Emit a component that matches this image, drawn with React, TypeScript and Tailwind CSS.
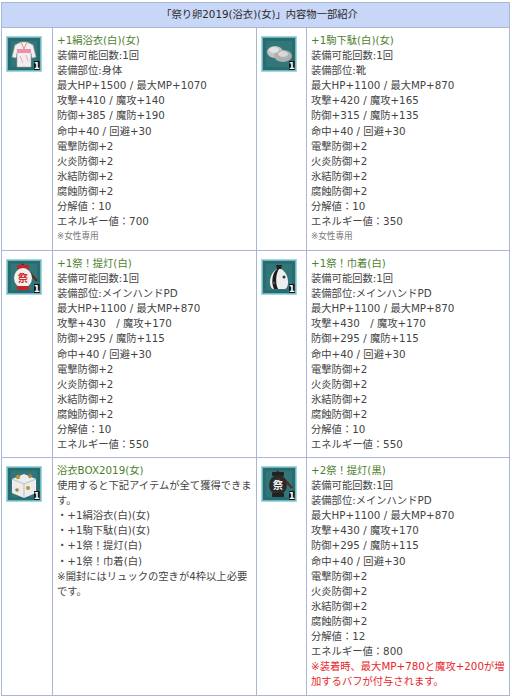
import React from "react";

type Line = { t: string; k?: "title" | "note" | "red" };

const Frame = ({ children }: { children: React.ReactNode }) => (
  <svg width="36" height="36" viewBox="0 0 36 36">
    <rect x="0" y="0" width="36" height="36" fill="#9fd8e0" />
    <rect x="1" y="1" width="34" height="34" fill="#6fb6bf" />
    <rect x="2" y="2" width="32" height="32" fill="#2a6b70" />
    <rect x="5" y="5" width="26" height="26" fill="#357a7e" opacity="0.7" />
    {children}
    <rect x="28" y="25" width="5.5" height="9" fill="#111" />
    <text x="30.8" y="33" fontSize="8.5" fontWeight="bold" fill="#fff" textAnchor="middle" fontFamily="DejaVu Sans, sans-serif">1</text>
  </svg>
);

const Kimono = () => (
  <Frame>
    <path d="M9 9 L15 6 L21 6 L27 9 L30 21 L26 22 L25 17 L25 31 L11 31 L11 17 L10 22 L6 21 Z" fill="#f2eeee" stroke="#a9a3a5" strokeWidth="0.6" />
    <rect x="11" y="13" width="14" height="4" fill="#ef8fae" />
    <path d="M15 6 L18 13 L21 6" fill="none" stroke="#d77" strokeWidth="0.8" />
    <path d="M14 20 L17 27 M20 19 L22 25" stroke="#e79ab0" strokeWidth="0.8" />
  </Frame>
);

const Geta = () => (
  <Frame>
    <ellipse cx="14" cy="16" rx="8" ry="6" fill="#c4c4c4" />
    <ellipse cx="22" cy="20" rx="9" ry="6" fill="#b0b0b0" />
    <ellipse cx="13" cy="14" rx="5" ry="3" fill="#e2e2e2" />
    <ellipse cx="22" cy="18" rx="5" ry="3" fill="#d8d8d8" />
  </Frame>
);

const Lantern = ({ dark }: { dark?: boolean }) => (
  <Frame>
    <line x1="16" y1="5" x2="31" y2="22" stroke="#5a2e1c" strokeWidth="2.5" />
    <rect x="11" y="6" width="12" height="4" rx="1" fill={dark ? "#222" : "#c0262a"} />
    <ellipse cx="17" cy="19" rx="9" ry="10" fill={dark ? "#2b2b2b" : "#f3f0ee"} />
    <rect x="11" y="27" width="12" height="4" rx="1" fill={dark ? "#222" : "#c0262a"} />
    <text x="17" y="23" fontSize="10" fontWeight="bold" fill={dark ? "#f5f5f5" : "#d42a2a"} textAnchor="middle" fontFamily="Noto Sans CJK JP, sans-serif">祭</text>
  </Frame>
);

const Bag = () => (
  <Frame>
    <path d="M15 6 L21 6 L20 10 L16 10 Z" fill="#222" />
    <path d="M16 10 C8 14 7 28 12 30 L24 30 C29 28 28 14 20 10 Z" fill="#eeeeee" />
    <path d="M16 10 C11 14 10 24 13 30 L17 30 C14 24 15 14 18 10 Z" fill="#1c1c1c" />
    <circle cx="23" cy="18" r="1.5" fill="#333" />
    <circle cx="13" cy="24" r="1.2" fill="#555" />
  </Frame>
);

const Box = () => (
  <Frame>
    <path d="M6 13 L18 8 L30 13 L30 27 L18 32 L6 27 Z" fill="#ececec" />
    <path d="M6 13 L18 18 L30 13" fill="none" stroke="#aaa" strokeWidth="0.7" />
    <path d="M18 18 L18 32" stroke="#aaa" strokeWidth="0.7" />
    <circle cx="12" cy="11" r="2.2" fill="#b8943c" />
    <circle cx="24" cy="10" r="2" fill="#a8843a" />
    <circle cx="22" cy="22" r="2" fill="#b8943c" />
    <circle cx="11" cy="24" r="1.8" fill="#a8843a" />
  </Frame>
);

const COMMON: Line[] = [
  { t: "電撃防御+2" },
  { t: "火炎防御+2" },
  { t: "氷結防御+2" },
  { t: "腐蝕防御+2" },
];

const cells: { icon: React.ReactNode; lines: Line[] }[] = [
  {
    icon: <Kimono />,
    lines: [
      { t: "+1絹浴衣(白)(女)", k: "title" },
      { t: "装備可能回数:1回" },
      { t: "装備部位:身体" },
      { t: "最大HP+1500 / 最大MP+1070" },
      { t: "攻撃+410 / 魔攻+140" },
      { t: "防御+385 / 魔防+190" },
      { t: "命中+40 / 回避+30" },
      ...COMMON,
      { t: "分解値：10" },
      { t: "エネルギー値：700" },
      { t: "※女性専用", k: "note" },
    ],
  },
  {
    icon: <Geta />,
    lines: [
      { t: "+1駒下駄(白)(女)", k: "title" },
      { t: "装備可能回数:1回" },
      { t: "装備部位:靴" },
      { t: "最大HP+1100 / 最大MP+870" },
      { t: "攻撃+420 / 魔攻+165" },
      { t: "防御+315 / 魔防+135" },
      { t: "命中+40 / 回避+30" },
      ...COMMON,
      { t: "分解値：10" },
      { t: "エネルギー値：350" },
      { t: "※女性専用", k: "note" },
    ],
  },
  {
    icon: <Lantern />,
    lines: [
      { t: "+1祭！提灯(白)", k: "title" },
      { t: "装備可能回数:1回" },
      { t: "装備部位:メインハンドPD" },
      { t: "最大HP+1100 / 最大MP+870" },
      { t: "攻撃+430　/ 魔攻+170" },
      { t: "防御+295 / 魔防+115" },
      { t: "命中+40 / 回避+30" },
      ...COMMON,
      { t: "分解値：10" },
      { t: "エネルギー値：550" },
    ],
  },
  {
    icon: <Bag />,
    lines: [
      { t: "+1祭！巾着(白)", k: "title" },
      { t: "装備可能回数:1回" },
      { t: "装備部位:メインハンドPD" },
      { t: "最大HP+1100 / 最大MP+870" },
      { t: "攻撃+430　/ 魔攻+170" },
      { t: "防御+295 / 魔防+115" },
      { t: "命中+40 / 回避+30" },
      ...COMMON,
      { t: "分解値：10" },
      { t: "エネルギー値：550" },
    ],
  },
  {
    icon: <Box />,
    lines: [
      { t: "浴衣BOX2019(女)", k: "title" },
      { t: "使用すると下記アイテムが全て獲得できま" },
      { t: "す。" },
      { t: "・+1絹浴衣(白)(女)" },
      { t: "・+1駒下駄(白)(女)" },
      { t: "・+1祭！提灯(白)" },
      { t: "・+1祭！巾着(白)" },
      { t: "※開封にはリュックの空きが4枠以上必要" },
      { t: "です。" },
    ],
  },
  {
    icon: <Lantern dark />,
    lines: [
      { t: "+2祭！提灯(黒)", k: "title" },
      { t: "装備可能回数:1回" },
      { t: "装備部位:メインハンドPD" },
      { t: "最大HP+1100 / 最大MP+870" },
      { t: "攻撃+430 / 魔攻+170" },
      { t: "防御+295 / 魔防+115" },
      { t: "命中+40 / 回避+30" },
      ...COMMON,
      { t: "分解値：12" },
      { t: "エネルギー値：800" },
      { t: "※装着時、最大MP+780と魔攻+200が増", k: "red" },
      { t: "加するバフが付与されます。", k: "red" },
    ],
  },
];

const LineView = ({ l }: { l: Line }) => {
  if (l.k === "note")
    return <div className="whitespace-nowrap text-[8.6px] leading-[15px] text-[#777]">{l.t}</div>;
  if (l.k === "title")
    return <div className="whitespace-nowrap text-[#4c7f2d]">{l.t}</div>;
  if (l.k === "red")
    return <div className="whitespace-nowrap text-[#e8262b]">{l.t}</div>;
  return <div className="whitespace-nowrap">{l.t}</div>;
};

export default function App() {
  return (
    <div className="w-[512px] h-[698px] bg-white pt-[2px] pl-px font-[family-name:DejaVu_Sans,Noto_Sans_CJK_JP,sans-serif] text-[10.3px] leading-[15.1px] text-[#444]">
      <div className="grid w-[509px] grid-cols-[50px_203px_49px_202px] grid-rows-[24px_222px_206px_237px] gap-px bg-[#a9b6d4] p-px">
        <div className="col-span-4 flex items-center justify-center bg-[#c8d6f7] pl-[8px] text-[#2a2a2a]">
          「祭り卵2019(浴衣)(女)」内容物一部紹介
        </div>
        {cells.map((c, i) => (
          <React.Fragment key={i}>
            <div className="bg-white pl-[4px] pt-[8px]">{c.icon}</div>
            <div className="overflow-hidden bg-white pl-[4px] pt-[5px]">
              {c.lines.map((l, j) => (
                <LineView key={j} l={l} />
              ))}
            </div>
          </React.Fragment>
        ))}
      </div>
    </div>
  );
}
